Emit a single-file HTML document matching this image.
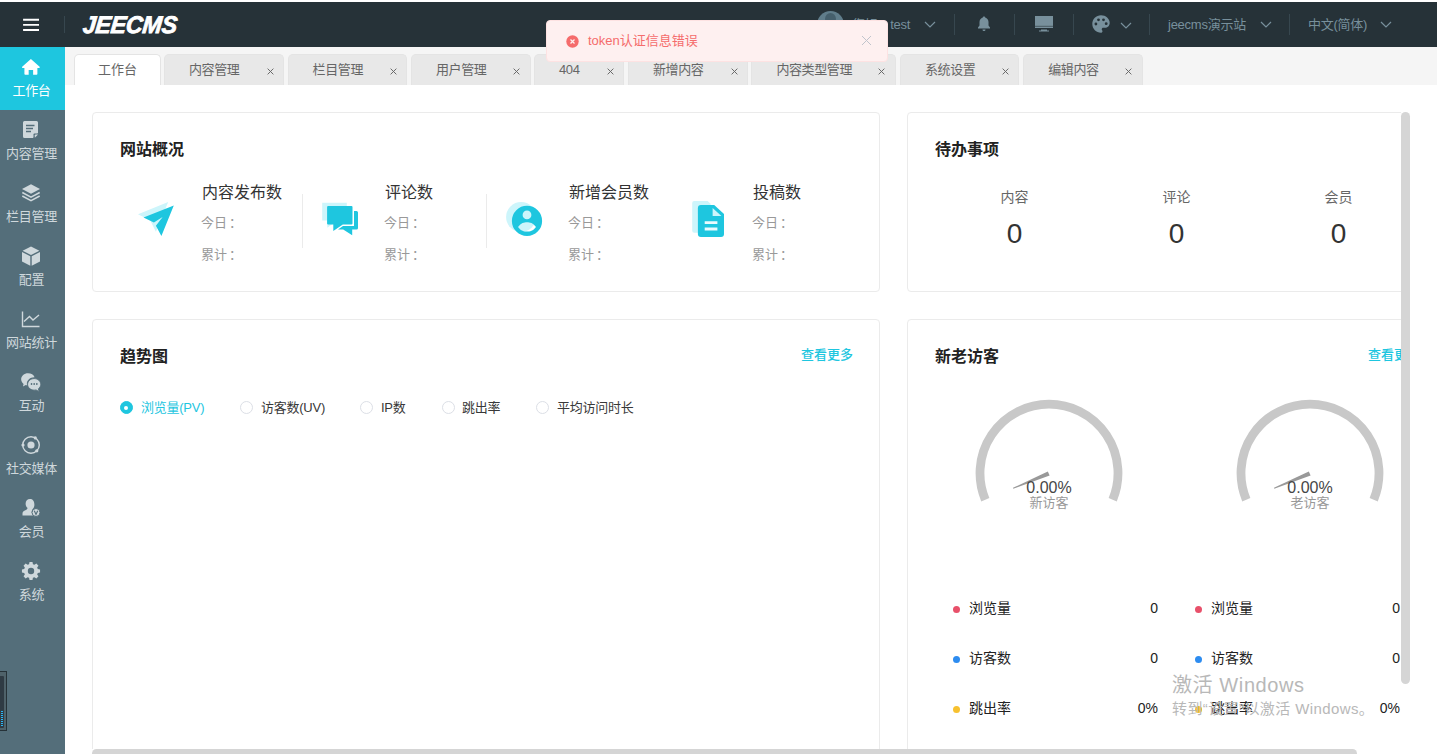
<!DOCTYPE html>
<html lang="zh-CN">
<head>
<meta charset="utf-8">
<title>JEECMS</title>
<style>
*{box-sizing:border-box;margin:0;padding:0}
html,body{width:1437px;height:754px;overflow:hidden;background:#fff}
body{font-family:"Liberation Sans","Noto Sans CJK SC",sans-serif;font-size:13px;color:#333;position:relative}
.abs{position:absolute}
#header{position:absolute;left:0;top:2px;width:1437px;height:45px;background:#263238}
#logo{position:absolute;left:83.3px;top:8px;font-weight:bold;font-style:italic;font-size:24px;line-height:30px;color:#fff;letter-spacing:-.3px;white-space:nowrap;-webkit-text-stroke:.8px #fff;transform-origin:0 50%;transform:scaleX(.97) skewX(-6deg)}
#sidebar{position:absolute;left:0;top:47px;width:65px;height:707px;background:#546e7a}
.nav{position:absolute;left:0;width:65px;height:63px;color:#cfd8dc;text-align:center}
.nav.on{background:#1ec6df;color:#fff}
.nav svg{position:absolute;left:19px;top:8px;width:24px;height:24px}
.nav span{position:absolute;left:-11px;width:85px;top:34.5px;line-height:18px;font-size:13px;white-space:nowrap;letter-spacing:-0.3px}
#tabbar{position:absolute;left:65px;top:47px;width:1372px;height:38px;overflow:hidden;background:#f5f5f5}
.tab{position:absolute;top:7px;height:31px;border:1px solid #e4e4e4;border-bottom:none;border-radius:5px 5px 0 0;background:#e8e8e8;color:#666;font-size:13px;line-height:29px;white-space:nowrap}
.tab.on{background:#fff}
.tab b{font-weight:normal;position:absolute;top:0;letter-spacing:-.4px}
.tab i{font-style:normal;position:absolute;top:1px;font-size:14px;color:#777}
.card{position:absolute;border:1px solid #ebebeb;border-radius:4px;background:#fff}
.ttl{position:absolute;font-size:16px;font-weight:bold;color:#222;line-height:22px;white-space:nowrap}
.t{position:absolute;white-space:nowrap}

.hx{top:13px;line-height:20px;font-size:13px;letter-spacing:-.25px;color:#78909c}
.hdiv{position:absolute;top:12px;width:1px;height:21px;background:#37474f}
.chev path{fill:none;stroke:#78909c;stroke-width:1.2}
#toast{position:absolute;left:546px;top:20px;width:342px;height:42px;background:#fef0f0;border:1px solid #fde2e2;border-radius:4px;color:#f56c6c;font-size:13px}

.lab{position:absolute;font-size:16px;line-height:22px;color:#333;white-space:nowrap}
.sub{margin-left:-1px;position:absolute;font-size:13px;line-height:18px;color:#999;white-space:nowrap}
.vdiv{position:absolute;top:81px;width:1px;height:54px;background:#ebebeb}
.sub i{font-style:normal;margin-left:2px}
.todo{position:absolute;width:100px;text-align:center}
.todo .tl{padding-left:1px;display:block;text-decoration:none;font-size:14px;line-height:18px;color:#666}
.todo .tv{display:block;text-decoration:none;font-size:28px;line-height:30px;color:#333;margin-top:13px;padding-left:1px}
.more{position:absolute;font-size:13px;font-weight:500;color:#1ec6df;line-height:18px;white-space:nowrap}
.rd{position:absolute;top:81px;width:13px;height:13px;margin-left:-.5px;border-radius:50%;border:1px solid #dcdfe6;background:#fff}
.rd.on{border-color:#1ec6df;background:#1ec6df}
.rd.on:after{content:"";position:absolute;left:3.5px;top:3.5px;width:4px;height:4px;border-radius:50%;background:#fff}
.rl{position:absolute;top:78px;letter-spacing:-.25px;font-size:13px;line-height:20px;color:#383838;white-space:nowrap}
.lg{position:absolute;font-size:14px;line-height:20px;color:#222;white-space:nowrap}
.dot{position:absolute;width:7px;height:7px;border-radius:50%}
#main{position:absolute;left:65px;top:85px;width:1336px;height:664px;overflow:hidden}
</style>
</head>
<body>
<div id="header">
  <svg class="abs" style="left:22px;top:15px" width="18" height="16" viewBox="0 0 18 16"><path d="M1.100 2.800h15.900M1.100 7.900h15.900M1.100 13h15.900" stroke="#fff" stroke-width="1.900"/></svg>
  <div class="abs" style="left:64px;top:14px;width:1px;height:17px;background:#37474f"></div>
  <div id="logo">JEECMS</div>

  <div class="abs" style="left:816.5px;top:8.5px;width:27px;height:27px;border-radius:50%;background:#607d8b;overflow:hidden"><div class="abs" style="left:8px;top:2px;width:11px;height:12px;border-radius:50%;background:#455f6c"></div><div class="abs" style="left:2px;top:14px;width:23px;height:20px;border-radius:50%;background:#455f6c"></div></div>
  <div class="t hx" style="left:852px">您好，test</div>
  <svg class="abs chev" style="left:924px;top:19px" width="12" height="7" viewBox="0 0 12 7"><path d="M1 1l5 5 5-5"/></svg>
  <div class="hdiv" style="left:954px"></div>
  <svg class="abs" style="left:977px;top:14px" width="14" height="16" viewBox="0 0 14 16"><path d="M7 0.500c.7 0 1.200.5 1.200 1.100 2 .6 3.300 2.300 3.300 4.400v3.500l1.500 2v.9H1v-.9l1.500-2V6c0-2.100 1.300-3.800 3.300-4.400 0-.6.500-1.100 1.200-1.100zM5.500 13.400h3c0 .9-.7 1.600-1.500 1.600s-1.500-.7-1.500-1.600z" fill="#78909c"/></svg>
  <div class="hdiv" style="left:1014px"></div>
  <svg class="abs" style="left:1035px;top:14px" width="18" height="16" viewBox="0 0 18 16"><path d="M0 0h18v12H0zM6 13.500h6v1h2v1H4v-1h2z" fill="#78909c"/><path d="M0 10.300h18" stroke="#263238" stroke-width=".6"/></svg>
  <div class="hdiv" style="left:1073px"></div>
  <svg class="abs" style="left:1092px;top:13px" width="18" height="18" viewBox="0 0 18 18"><path d="M9 .3C4.200.3.300 4.200.300 9s3.900 8.700 8.700 8.700c.8 0 1.500-.7 1.500-1.500 0-.4-.1-.7-.4-1-.2-.3-.4-.6-.4-1 0-.8.700-1.500 1.500-1.500h1.700c2.700 0 4.800-2.200 4.800-4.800C17.700 3.800 13.800.3 9 .3z" fill="#78909c"/><circle cx="3.900" cy="9" r="1.400" fill="#263238"/><circle cx="6.500" cy="4.800" r="1.400" fill="#263238"/><circle cx="11.500" cy="4.800" r="1.400" fill="#263238"/><circle cx="14.200" cy="8.700" r="1.400" fill="#263238"/></svg>
  <svg class="abs chev" style="left:1120px;top:20px" width="12" height="7" viewBox="0 0 12 7"><path d="M1 1l5 5 5-5"/></svg>
  <div class="hdiv" style="left:1149px"></div>
  <div class="t hx" style="left:1168px">jeecms演示站</div>
  <svg class="abs chev" style="left:1260px;top:19px" width="12" height="7" viewBox="0 0 12 7"><path d="M1 1l5 5 5-5"/></svg>
  <div class="hdiv" style="left:1289px"></div>
  <div class="t hx" style="left:1308px">中文(简体)</div>
  <svg class="abs chev" style="left:1380px;top:19px" width="12" height="7" viewBox="0 0 12 7"><path d="M1 1l5 5 5-5"/></svg>
</div>
<div id="sidebar">
<div class="nav on" style="top:0px"><svg viewBox="0 0 24 24"><g transform="translate(11.9 3.9) scale(0.927 0.909) translate(-12 -2.5)"><path d="M12 2.5 2.6 11.2c-.5.5-.2 1.3.5 1.3H5v6.6c0 .5.4.9.9.9h3.7v-5.2h4.8V20h3.7c.5 0 .9-.4.9-.9v-6.6h1.9c.7 0 1-.8.5-1.3z" fill="currentColor"/></g></svg><span>工作台</span></div>
<div class="nav" style="top:63px"><svg viewBox="0 0 24 24"><path d="M5.5 3h12A1.500 1.500 0 0 1 19 4.500V15l-5 5H5.500A1.500 1.500 0 0 1 4 18.500v-14A1.500 1.500 0 0 1 5.500 3z" fill="currentColor"/><path d="M7 7.500h8.500M7 10.500h7M7 13.500h5" stroke="#546e7a" stroke-width="1.500"/><path d="M14.500 20v-3.500a1 1 0 0 1 1-1H19" fill="#546e7a"/><path d="M15.800 19.800v-2.500a.8.800 0 0 1 .8-.8h2.500z" fill="currentColor"/></svg><span>内容管理</span></div>
<div class="nav" style="top:126px"><svg viewBox="0 0 24 24"><path d="M12 3.200 3 8l9 4.800L21 8z" fill="currentColor"/><path d="M3.300 11.500 12 16.200l8.700-4.700M3.300 15 12 19.700l8.700-4.700" fill="none" stroke="currentColor" stroke-width="1.500"/></svg><span>栏目管理</span></div>
<div class="nav" style="top:189px"><svg viewBox="0 0 24 24"><path d="M12 2.600 3.600 6.800 12 11l8.400-4.200z" fill="currentColor"/><path d="M3 8v9.600l8.300 4.200v-9.600zM21 8v9.600l-8.300 4.200v-9.600z" fill="currentColor"/></svg><span>配置</span></div>
<div class="nav" style="top:252px"><svg viewBox="0 0 24 24"><path d="M3.500 4.500v15h17" fill="none" stroke="currentColor" stroke-width="1.400"/><path d="M5 14.500l5.500-5 3.500 3.500 6-5" fill="none" stroke="currentColor" stroke-width="1.400"/></svg><span>网站统计</span></div>
<div class="nav" style="top:315px"><svg viewBox="0 0 24 24"><g transform="translate(12 12.5) scale(1.06 1.16) translate(-12.300 -11)"><path d="M9.500 3C5.900 3 3 5.300 3 8.200c0 1.600.9 3 2.300 4l-.6 2.300 2.700-1.300c.4.100.8.200 1.200.2-.1-.4-.2-.9-.2-1.300 0-3.200 3.100-5.700 6.900-5.700h.4C14.900 4.400 12.400 3 9.500 3z" fill="currentColor"/><path d="M15.300 7.600c-3.400 0-6.200 2.200-6.200 5s2.800 5 6.200 5c.6 0 1.200-.1 1.800-.2l2.900 1.500-.7-2.500c1.400-.9 2.200-2.300 2.200-3.800 0-2.800-2.800-5-6.200-5z" fill="currentColor" stroke="#546e7a" stroke-width=".8"/><circle cx="12.800" cy="12.300" r=".8" fill="#546e7a"/><circle cx="15.300" cy="12.300" r=".8" fill="#546e7a"/><circle cx="17.800" cy="12.300" r=".8" fill="#546e7a"/></g></svg><span>互动</span></div>
<div class="nav" style="top:378px"><svg viewBox="0 0 24 24"><circle cx="12" cy="12" r="8.300" fill="none" stroke="currentColor" stroke-width="1.400"/><circle cx="12" cy="12" r="3.600" fill="currentColor"/><circle cx="4" cy="12" r="1.600" fill="currentColor"/><circle cx="16.300" cy="4.900" r="1.600" fill="currentColor"/><circle cx="17.800" cy="17.800" r="1.600" fill="currentColor"/></svg><span>社交媒体</span></div>
<div class="nav" style="top:441px"><svg viewBox="0 0 24 24"><path d="M11 3c-2.600 0-4.400 2-4.400 4.700 0 1.800.8 3.500 2 4.400-.2 1.200-1.300 1.800-2.700 2.400C4.300 15.200 3.500 16 3.500 17.500V19.500h11a5 5 0 0 1-.8-6.500c1-1 1.700-2.500 1.700-4.300C15.400 5 13.600 3 11 3z" fill="currentColor"/><circle cx="17" cy="16.500" r="4" fill="currentColor" stroke="#546e7a" stroke-width="1"/><path d="M15.300 14.800 17 18.400l1.700-3.600" fill="none" stroke="#546e7a" stroke-width="1.200"/></svg><span>会员</span></div>
<div class="nav" style="top:504px"><svg viewBox="0 0 24 24"><path d="M10.300 2.500h3.400l.5 2.600 1.700.7 2.200-1.500 2.400 2.400-1.500 2.200.7 1.700 2.600.5v3.400l-2.600.5-.7 1.700 1.500 2.200-2.400 2.400-2.200-1.500-1.700.7-.5 2.600h-3.400l-.5-2.600-1.700-.7-2.200 1.500-2.400-2.400 1.500-2.200-.7-1.700-2.600-.5v-3.400l2.600-.5.700-1.700-1.500-2.200 2.400-2.400 2.200 1.500 1.700-.7z" fill="currentColor" transform="translate(12 12) scale(.88) translate(-12 -12.800)"/><circle cx="12" cy="12" r="3.200" fill="#546e7a"/></svg><span>系统</span></div>
<div class="abs" style="left:0;top:624px;width:7px;height:60px;background:#4f626a;border:1px solid #263238;border-left:none"><div class="abs" style="left:0;top:4px;width:4px;height:52px;border-radius:0 1px 1px 0;background:#2f3b44"></div><div class="abs" style="left:1px;top:39px;width:2px;height:16px;background:repeating-linear-gradient(#29b6f6 0 1px,#2f3b44 1px 2px)"></div></div>
</div>
<div id="tabbar">
<div class="tab on" style="left:9.4px;width:86.3px;text-align:center">工作台</div>
<div class="tab" style="left:99.0px;width:120.0px"><b style="left:24px">内容管理</b><svg class="abs" style="right:9.500px;top:12.500px" width="7" height="7" viewBox="0 0 8 8"><path d="M.7.7l6.600 6.600M7.300.7.700 7.300" stroke="#666" stroke-width="1.100"/></svg></div>
<div class="tab" style="left:222.6px;width:119.6px"><b style="left:24px">栏目管理</b><svg class="abs" style="right:9.500px;top:12.500px" width="7" height="7" viewBox="0 0 8 8"><path d="M.7.7l6.600 6.600M7.300.7.700 7.300" stroke="#666" stroke-width="1.100"/></svg></div>
<div class="tab" style="left:346.0px;width:119.8px"><b style="left:24px">用户管理</b><svg class="abs" style="right:9.500px;top:12.500px" width="7" height="7" viewBox="0 0 8 8"><path d="M.7.7l6.600 6.600M7.300.7.700 7.300" stroke="#666" stroke-width="1.100"/></svg></div>
<div class="tab" style="left:469.0px;width:90.2px"><b style="left:24px">404</b><svg class="abs" style="right:9.500px;top:12.500px" width="7" height="7" viewBox="0 0 8 8"><path d="M.7.7l6.600 6.600M7.300.7.700 7.300" stroke="#666" stroke-width="1.100"/></svg></div>
<div class="tab" style="left:563.0px;width:120.0px"><b style="left:24px">新增内容</b><svg class="abs" style="right:9.500px;top:12.500px" width="7" height="7" viewBox="0 0 8 8"><path d="M.7.7l6.600 6.600M7.300.7.700 7.300" stroke="#666" stroke-width="1.100"/></svg></div>
<div class="tab" style="left:686.4px;width:144.6px"><b style="left:24px">内容类型管理</b><svg class="abs" style="right:9.500px;top:12.500px" width="7" height="7" viewBox="0 0 8 8"><path d="M.7.7l6.600 6.600M7.300.7.700 7.300" stroke="#666" stroke-width="1.100"/></svg></div>
<div class="tab" style="left:835.0px;width:119.2px"><b style="left:24px">系统设置</b><svg class="abs" style="right:9.500px;top:12.500px" width="7" height="7" viewBox="0 0 8 8"><path d="M.7.7l6.600 6.600M7.300.7.700 7.300" stroke="#666" stroke-width="1.100"/></svg></div>
<div class="tab" style="left:958.2px;width:119.8px"><b style="left:24px">编辑内容</b><svg class="abs" style="right:9.500px;top:12.500px" width="7" height="7" viewBox="0 0 8 8"><path d="M.7.7l6.600 6.600M7.300.7.700 7.300" stroke="#666" stroke-width="1.100"/></svg></div>
</div>
<div id="main">
<div class="card" style="left:27px;top:27px;width:788px;height:180px">
<div class="ttl" style="left:27px;top:26px">网站概况</div>
<svg class="abs" style="left:44px;top:87px" width="40" height="40" viewBox="137 200 40 40"><path d="M168.200 201.900 138 214.300l9 4.500 3 1.200 5.900 11.800z" fill="#cdf5fb"/><path d="M173.800 205.500 143.500 217.400l10.400 5.200 8.700-5.600-6.700 8.800 5.500 10.200z" fill="#1ec6df"/></svg><div class="lab" style="left:109px;top:69px">内容发布数</div><div class="sub" style="left:109px;top:101px">今日<i>：</i></div><div class="sub" style="left:109px;top:133px">累计<i>：</i></div><div class="vdiv" style="left:209px"></div>
<svg class="abs" style="left:227px;top:87px" width="40" height="40" viewBox="320 200 40 40"><path d="M322.200 202.700h24.600v17.900h-24.600z M327.300 220.600v7.200l10-7.200z" fill="#cdf5fb"/><path d="M354 211.100h2.500a1.500 1.500 0 0 1 1.500 1.500v15.300a1.500 1.500 0 0 1-1.500 1.500h-4.300v5.900l-9-5.900h-5.200l5-3.400h11z" fill="#1ec6df"/><path d="M328.100 205.900h23.400a1 1 0 0 1 1 1v16.700a1 1 0 0 1-1 1h-8.700l-9.500 6.400v-6.400h-5.200a1 1 0 0 1-1-1v-16.700a1 1 0 0 1 1-1z" fill="#1ec6df" stroke="#fff" stroke-width="0"/></svg><div class="lab" style="left:292px;top:69px">评论数</div><div class="sub" style="left:292px;top:101px">今日<i>：</i></div><div class="sub" style="left:292px;top:133px">累计<i>：</i></div><div class="vdiv" style="left:393px"></div>
<svg class="abs" style="left:410px;top:87px" width="40" height="40" viewBox="503 200 40 40"><circle cx="521.100" cy="217" r="15" fill="#cdf5fb"/><path fill-rule="evenodd" d="M527 205.800a15.100 15.100 0 1 0 0 30.200 15.100 15.100 0 1 0 0-30.200z M527 210.500a4.400 4.400 0 1 1 0 8.800 4.400 4.400 0 1 1 0-8.800z M518 227c3-4.200 6-4.800 9-4.800s6 .6 9 4.800c-3 4-6 4.600-9 4.600s-6-.6-9-4.600z" fill="#1ec6df"/></svg><div class="lab" style="left:476px;top:69px">新增会员数</div><div class="sub" style="left:476px;top:101px">今日<i>：</i></div><div class="sub" style="left:476px;top:133px">累计<i>：</i></div>
<svg class="abs" style="left:594px;top:87px" width="40" height="40" viewBox="687 200 40 40"><path d="M694.200 201.100h13.400l3 2.700v27a2 2 0 0 1-2 2h-14.400a2 2 0 0 1-2-2v-27.700a2 2 0 0 1 2-2z" fill="#cdf5fb"/><path d="M700.900 205h13.300l9.800 8.900v20a3 3 0 0 1-3 3h-20.100a3 3 0 0 1-3-3v-25.900a3 3 0 0 1 3-3z" fill="#1ec6df"/><path d="M712.600 207.900v8h8.800z" fill="#cdf5fb"/><path d="M704.700 221.200h12.700v2.800h-12.700zM704.700 227.400h12.700v3h-12.700z" fill="#e9fbfe"/></svg><div class="lab" style="left:660px;top:69px">投稿数</div><div class="sub" style="left:660px;top:101px">今日<i>：</i></div><div class="sub" style="left:660px;top:133px">累计<i>：</i></div>
</div><div class="card" style="left:842px;top:27px;width:600px;height:180px">
<div class="ttl" style="left:27px;top:26px">待办事项</div>
<div class="todo" style="left:56px;top:75px"><span class="tl">内容</span><span class="tv">0</span></div>
<div class="todo" style="left:218px;top:75px"><span class="tl">评论</span><span class="tv">0</span></div>
<div class="todo" style="left:380px;top:75px"><span class="tl">会员</span><span class="tv">0</span></div>
</div><div class="card" style="left:27px;top:234px;width:788px;height:500px">
<div class="ttl" style="left:27px;top:26px">趋势图</div>
<div class="more" style="right:26px;top:26px">查看更多</div>
<div class="rd on" style="left:27px"></div><div class="rl" style="left:48px;color:#1ec6df">浏览量(PV)</div>
<div class="rd" style="left:147px"></div><div class="rl" style="left:168px">访客数(UV)</div>
<div class="rd" style="left:267px"></div><div class="rl" style="left:288px">IP数</div>
<div class="rd" style="left:349px"></div><div class="rl" style="left:369px">跳出率</div>
<div class="rd" style="left:443px"></div><div class="rl" style="left:464px">平均访问时长</div>
</div><div class="card" style="left:842px;top:234px;width:600px;height:500px">
<div class="ttl" style="left:27px;top:26px">新老访客</div>
<div class="more" style="left:460px;top:26px">查看更多</div>
<svg class="abs" style="left:0;top:0;font-family:'Liberation Sans','Noto Sans CJK SC',sans-serif" width="600" height="260" viewBox="0 0 600 260"><path d="M77.3 179.7A69.0 69.0 0 1 1 204.7 179.7" fill="none" stroke="#c8c8c8" stroke-width="8.800"/><path d="M139.8 151.4L105.0 167.8L105.3 168.8L141.6 155.6z" fill="#999"/><text x="141.0" y="172.9" text-anchor="middle" font-size="16" fill="#464646">0.00%</text><text x="141.0" y="186.7" text-anchor="middle" font-size="13" fill="#999">新访客</text><path d="M338.3 179.7A69.0 69.0 0 1 1 465.7 179.7" fill="none" stroke="#c8c8c8" stroke-width="8.800"/><path d="M400.8 151.4L366.0 167.8L366.3 168.8L402.6 155.6z" fill="#999"/><text x="402.0" y="172.9" text-anchor="middle" font-size="16" fill="#464646">0.00%</text><text x="402.0" y="186.7" text-anchor="middle" font-size="13" fill="#999">老访客</text></svg>
<div class="dot" style="left:45px;top:286px;background:#e8506a"></div><div class="lg" style="left:61px;top:278px">浏览量</div><div class="lg" style="right:348px;top:278px">0</div><div class="dot" style="left:45px;top:336px;background:#2d8cf0"></div><div class="lg" style="left:61px;top:328px">访客数</div><div class="lg" style="right:348px;top:328px">0</div><div class="dot" style="left:45px;top:386px;background:#f7c12f"></div><div class="lg" style="left:61px;top:378px">跳出率</div><div class="lg" style="right:348px;top:378px">0%</div><div class="dot" style="left:287px;top:286px;background:#e8506a"></div><div class="lg" style="left:303px;top:278px">浏览量</div><div class="lg" style="right:106px;top:278px">0</div><div class="dot" style="left:287px;top:336px;background:#2d8cf0"></div><div class="lg" style="left:303px;top:328px">访客数</div><div class="lg" style="right:106px;top:328px">0</div><div class="dot" style="left:287px;top:386px;background:#f7c12f"></div><div class="lg" style="left:303px;top:378px">跳出率</div><div class="lg" style="right:106px;top:378px">0%</div>
</div><div class="t" style="left:1107px;top:586px;font-size:20px;line-height:28px;color:#b8b8b8;letter-spacing:.6px">激活 Windows</div>
<div class="t" style="left:1107px;top:613px;font-size:15px;line-height:22px;color:#b8b8b8;letter-spacing:.4px">转到“设置”以激活 Windows。</div>
</div>
<div class="abs" style="left:1401px;top:112px;width:9px;height:572px;border-radius:4.500px;background:#d5d5d5"></div>
<div class="abs" style="left:92px;top:749px;width:1265px;height:9px;border-radius:4.500px;background:#d5d5d5"></div>
<div id="toast">
  <svg class="abs" style="left:19px;top:14px" width="13" height="13" viewBox="0 0 13 13"><circle cx="6.500" cy="6.500" r="6.200" fill="#f56c6c"/><path d="M4.500 4.500l4 4M8.500 4.500l-4 4" stroke="#fef0f0" stroke-width="1.300"/></svg>
  <div class="t" style="left:41px;top:10px;line-height:20px">token认证信息错误</div>
  <svg class="abs" style="left:314px;top:14px" width="11" height="11" viewBox="0 0 11 11"><path d="M1 1l9 9M10 1l-9 9" stroke="#c0c4cc" stroke-width="1"/></svg>
</div>
</body>
</html>
